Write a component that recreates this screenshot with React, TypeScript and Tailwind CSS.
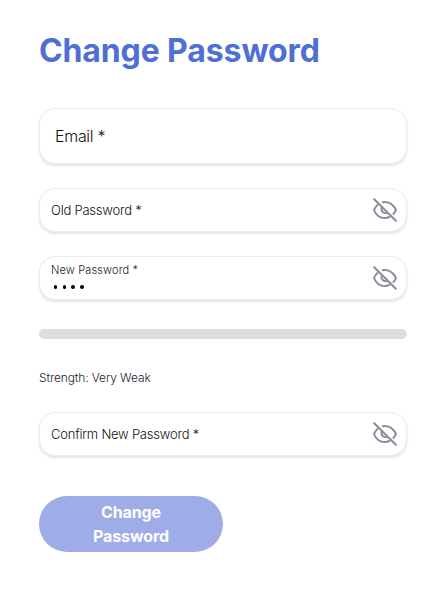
function EyeOff() {
  return (
    <svg className="h-6 w-6 shrink-0" viewBox="0 0 24 24" fill="none" stroke="#8b8c9b" strokeWidth="2">
      <path d="M0.6 0.6L23.4 23.4" />
      <path d="M9 4.3C15.5 2.8 20.5 6.5 23 12C22.3 13.8 21.2 15.3 19.9 16.6" />
      <path d="M4.9 6.5C3.1 7.9 1.8 9.8 1 12C4 19.5 11 21.8 17 18.6" />
      <path d="M9.2 9C7.2 12.8 10.5 16.2 14.5 14.8" />
    </svg>
  );
}

const fieldClass =
  "flex w-full items-center justify-between rounded-2xl border border-[#ececec] bg-white shadow-[0_2px_3px_rgba(0,0,0,0.11)]";

function PasswordField({ label, filled = false }: { label: string; filled?: boolean }) {
  return (
    <div className={`${fieldClass} h-11 pr-[9px] pl-[11px]`}>
      {filled ? (
        <div className="flex flex-col pt-px">
          <span className="text-[11px] leading-[15px] font-[350] tracking-[0.15px] text-[#222]">{label}</span>
          <span className="flex h-4 items-center gap-[5.4px] pt-[2px] pl-[2.8px]">
            {[0, 1, 2, 3].map((i) => (
              <i key={i} className="h-[3.4px] w-[3.4px] rounded-full bg-black" />
            ))}
          </span>
        </div>
      ) : (
        <span className="text-[13px] leading-5 font-[350] tracking-[-0.22px] text-[#111]">{label}</span>
      )}
      <EyeOff />
    </div>
  );
}

export default function App() {
  return (
    <main className="flex h-[598px] w-full flex-col items-start bg-white pt-[27px] pr-[38px] pl-[39px] font-['Inter',sans-serif]">
      <h1 className="text-[32px] leading-[48px] font-bold tracking-[-0.12px] whitespace-nowrap text-[#506fd4]">
        Change Password
      </h1>
      <div className={`${fieldClass} mt-[33px] h-14 pl-[15px]`}>
        <span className="text-base leading-6 font-[350] tracking-[-0.3px] text-[#111]">Email *</span>
      </div>
      <div className="mt-6 flex w-full flex-col gap-6">
        <PasswordField label="Old Password *" />
        <PasswordField label="New Password *" filled />
      </div>
      <div className="mt-[29px] h-[10px] w-full rounded-full bg-[#dedede]" />
      <p className="mt-[30px] text-xs leading-[18px] font-[350] tracking-[-0.12px] text-[#1b1b30]">
        Strength: Very Weak
      </p>
      <div className="mt-[25px] w-full">
        <PasswordField label="Confirm New Password *" />
      </div>
      <button className="mt-10 flex h-14 w-[184px] flex-col items-center justify-center rounded-full bg-[#9eade7] text-base leading-6 font-bold tracking-[-0.1px] text-white">
        <span>Change</span>
        <span>Password</span>
      </button>
    </main>
  );
}
